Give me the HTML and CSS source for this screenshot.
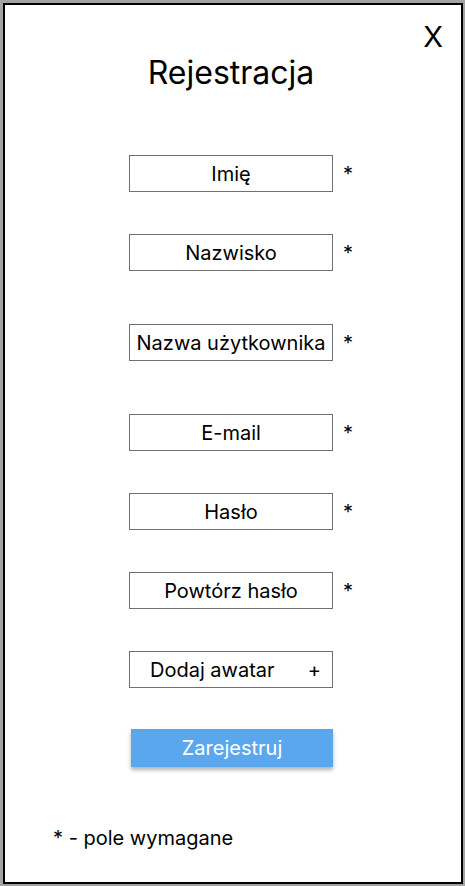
FILE: index.html
```html
<!DOCTYPE html>
<html lang="pl">
<head>
<meta charset="utf-8">
<title>Rejestracja</title>
<link rel="stylesheet" href="styles.css">
</head>
<body>
<div class="panel">
  <div class="close">X</div>
  <h1 class="title">Rejestracja</h1>
  <div class="form">
    <div class="row"><div class="field">Imię</div><span class="req">*</span></div>
    <div class="row"><div class="field">Nazwisko</div><span class="req">*</span></div>
    <div class="row row-wide"><div class="field">Nazwa użytkownika</div><span class="req">*</span></div>
    <div class="row row-wide"><div class="field">E-mail</div><span class="req">*</span></div>
    <div class="row"><div class="field">Hasło</div><span class="req">*</span></div>
    <div class="row"><div class="field">Powtórz hasło</div><span class="req">*</span></div>
    <div class="row"><div class="field field-avatar"><span>Dodaj awatar</span><span class="plus">+</span></div></div>
    <div class="row row-submit"><div class="submit">Zarejestruj</div></div>
  </div>
  <div class="note">* - pole wymagane</div>
</div>
</body>
</html>
```
FILE: styles.css
```css
html, body {
  margin: 0;
  padding: 0;
}
body {
  background: #a3a3a3;
  width: 465px;
  height: 886px;
  padding: 3px 2px 2px 3px;
  box-sizing: border-box;
  font-family: Inter, "Noto Sans", sans-serif;
  color: #000;
}
.panel {
  width: 460px;
  height: 881px;
  box-sizing: border-box;
  border: 2px solid #000;
  background: #fff;
  position: relative;
  display: flex;
  flex-direction: column;
}
.close {
  position: absolute;
  top: 14px;
  right: 18px;
  font-size: 29px;
  line-height: 36px;
}
.title {
  margin: 49px 0 0 0;
  font-weight: 400;
  font-size: 32px;
  line-height: 38px;
  text-align: center;
  padding-right: 4px;
}
.form {
  display: flex;
  flex-direction: column;
  padding-left: 124px;
  margin-top: 63px;
  gap: 42px;
}
.row {
  display: flex;
  align-items: baseline;
  gap: 10px;
  height: 37px;
}
.row-wide {
  margin-top: 11px;
}
.row-submit {
  margin-top: -1px;
  height: 38px;
}
.field {
  width: 204px;
  height: 37px;
  box-sizing: border-box;
  border: 1.5px solid #707070;
  display: flex;
  align-items: center;
  justify-content: center;
  font-size: 20px;
  white-space: nowrap;
}
.field-avatar {
  justify-content: space-between;
  padding: 0 11px 0 20px;
}
.plus {
  font-size: 20px;
}
.req {
  font-size: 20px;
}
.submit {
  margin-left: 2px;
  width: 202px;
  height: 38px;
  background: #5ba7ee;
  color: #fff;
  font-size: 20px;
  display: flex;
  align-items: center;
  justify-content: center;
  box-shadow: 0 3px 4px rgba(0, 0, 0, 0.3);
}
.note {
  margin-top: 59px;
  margin-left: 48px;
  font-size: 20px;
  line-height: 24px;
}
```
